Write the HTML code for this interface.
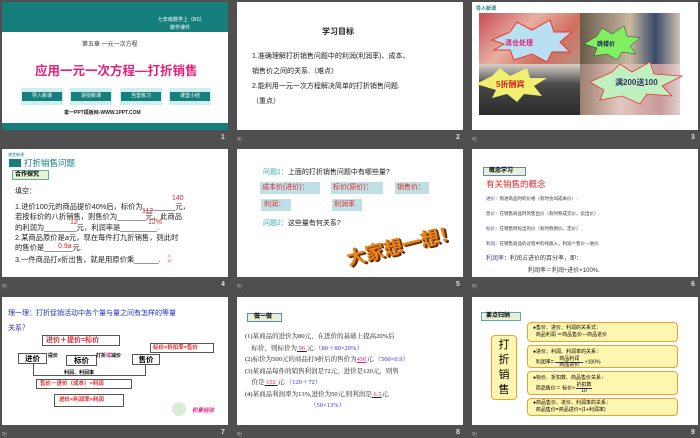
<!DOCTYPE html>
<html><head><meta charset="utf-8"><style>
*{margin:0;padding:0;box-sizing:border-box}
body{width:700px;height:438px;background:#4f4f4f;position:relative;overflow:hidden;font-family:"Liberation Sans","Noto Sans CJK SC",sans-serif}
.s{position:absolute;width:226px;height:128px;background:#fff;overflow:hidden}
.a{position:absolute;white-space:nowrap}
.n{position:absolute;color:#ddd;font-size:7px;font-weight:bold}
.m{position:absolute;color:#aaa;font-size:5px}
.btn{position:absolute;top:86px;width:42px;height:17px;background:#cdeff0}
.btn span{position:absolute;left:1px;right:1px;top:4px;height:9px;background:#167f7d;color:#fff;font-size:5px;text-align:center;line-height:9px}
.red{color:#e8262a}
.bx{position:absolute;border:1px solid #555;background:#fff}
</style></head><body>

<!-- slide 1 -->
<div class="s" style="left:2px;top:2px">
 <div class="a" style="left:0;top:0;width:226px;height:30px;background:#167f7d"></div>
 <div class="a" style="left:156px;top:14px;color:#fff;font-size:5px">七年级数学上（BS）</div>
 <div class="a" style="left:168px;top:22px;color:#fff;font-size:5px">数学课件</div>
 <div class="a" style="left:80px;top:37px;color:#333;font-size:6px">第五章 一元一次方程</div>
 <div class="a" style="left:33px;top:58px;color:#e0207a;font-size:12.5px;font-weight:bold">应用一元一次方程—打折销售</div>
 <div class="btn" style="left:19px"><span>导入新课</span></div>
 <div class="btn" style="left:68px"><span>讲授新课</span></div>
 <div class="btn" style="left:118px"><span>当堂练习</span></div>
 <div class="btn" style="left:167px"><span>课堂小结</span></div>
 <div class="a" style="left:62px;top:107px;color:#222;font-size:5px;font-weight:bold">第一PPT模板网-WWW.1PPT.COM</div>
 <div class="a" style="left:0;top:121px;width:226px;height:7px;background:#167f7d"></div>
</div>
<div class="n" style="left:221px;top:134px">1</div>

<!-- slide 2 -->
<div class="s" style="left:237px;top:2px">
 <div class="a" style="left:85px;top:24px;color:#222;font-size:8px;font-weight:bold">学习目标</div>
 <div class="a" style="left:15px;top:47px;color:#222;font-size:7px;line-height:15px">1.准确理解打折销售问题中的利润(利润率)、成本、<br>销售价之间的关系.（难点）<br>2.能利用一元一次方程解决简单的打折销售问题.<br>（重点）</div>
</div>
<div class="m" style="left:237px;top:136px">吩</div>
<div class="n" style="left:456px;top:134px">2</div>

<!-- slide 3 -->
<div class="s" style="left:472px;top:2px">
 <div class="a" style="left:4px;top:3px;color:#167f7d;font-size:5px;font-weight:bold">导入新课</div>
 <div class="a" style="left:7px;top:11px;width:101px;height:51px;background:linear-gradient(135deg,#c84a5a,#e8b0a0 40%,#d07060 70%,#b89080)"></div>
 <div class="a" style="left:108px;top:11px;width:100px;height:51px;background:linear-gradient(90deg,#6a5a4a,#c8b8a0 50%,#3a4a6a 75%,#d0c0b0)"></div>
 <div class="a" style="left:7px;top:62px;width:101px;height:51px;background:linear-gradient(180deg,#d8d0c8,#4a4a4a 40%,#2a2a2a)"></div>
 <div class="a" style="left:108px;top:62px;width:100px;height:51px;background:linear-gradient(90deg,#a08070,#e0c8c0 40%,#c89898 80%,#e0d0d0)"></div>
 <svg class="a" style="left:0;top:0" width="226" height="128">
  <polygon points="20,38 38,30 45,20 60,28 78,18 82,30 100,30 88,40 98,50 80,50 75,60 60,52 42,58 38,48 22,48 32,42" fill="#b8e0f0" stroke="#e33" stroke-width="1"/>
  <polygon points="112,42 125,34 130,26 140,32 152,24 155,34 168,36 158,44 164,52 150,50 145,58 135,52 122,54 125,46" fill="#80f060" stroke="#333" stroke-width=".5"/>
  <polygon points="4,82 20,74 28,66 38,74 55,66 58,76 75,76 62,84 70,94 52,92 45,100 35,92 20,96 24,88" fill="#f0f070"/>
  <polygon points="118,80 140,70 148,62 160,70 178,60 182,72 210,74 190,84 200,94 175,92 168,102 150,94 128,98 132,88" fill="#c0f0c0" stroke="#e33" stroke-width=".8"/>
 </svg>
 <div class="a" style="left:33px;top:36px;color:#e0207a;font-size:7px;font-weight:bold">清仓处理</div>
 <div class="a" style="left:125px;top:37px;color:#225;font-size:6px;font-weight:bold">跳楼价</div>
 <div class="a" style="left:24px;top:77px;color:#d22;font-size:8px;font-weight:bold">5折酬宾</div>
 <div class="a" style="left:143px;top:75px;color:#336;font-size:8px;font-weight:bold">满200送100</div>
</div>
<div class="m" style="left:472px;top:136px">吩</div>
<div class="n" style="left:691px;top:134px">3</div>

<!-- slide 4 -->
<div class="s" style="left:2px;top:149px">
 <div class="a" style="left:6px;top:3px;color:#167f7d;font-size:4px">课堂新课</div>
 <div class="a" style="left:7px;top:10px;width:12px;height:8px;background:#167f7d"></div>
 <div class="a" style="left:22px;top:8px;color:#167f7d;font-size:8.5px">打折销售问题</div>
 <div class="a" style="left:10px;top:21px;width:37px;height:10px;border:1px solid #6aa;background:#e8f4d0;font-size:6px;font-weight:bold;padding-left:2px;line-height:8px">合作探究</div>
 <div class="a" style="left:13px;top:37px;color:#222;font-size:7px">填空：</div>
 <div class="a" style="left:13px;top:53px;color:#222;font-size:7.3px;line-height:10.3px">1.进价100元的商品提价40%后，标价为________元，<br>若按标价的八折销售，则售价为_______元，此商品<br>的利润为________元，利润率是_________.<br>2.某商品原价是<i>a</i>元，现在每件打九折销售，则此时<br>的售价是_______元.<br><span style="display:inline-block;margin-top:2px">3.一件商品打<i>x</i>折出售，就是用原价乘______.</span></div>
 <div class="a red" style="left:170px;top:46px;font-size:7px">140</div>
 <div class="a red" style="left:140px;top:59px;font-size:7px">112</div>
 <div class="a red" style="left:68px;top:70px;font-size:7px">12</div>
 <div class="a red" style="left:146px;top:70px;font-size:7px">12%</div>
 <div class="a red" style="left:56px;top:94px;font-size:7px">0.9<i>a</i></div>
 <div class="a red" style="left:165px;top:104px;font-size:4px;line-height:5px;text-align:center">x<br>10</div>
</div>
<div class="m" style="left:2px;top:283px">吩</div>
<div class="n" style="left:221px;top:281px">4</div>

<!-- slide 5 -->
<div class="s" style="left:237px;top:149px">
 <div class="a" style="left:26px;top:18px;font-size:7px;color:#222"><span style="color:#3aa">问题1：</span>上面的打折销售问题中有哪些量?</div>
 <div class="a red" style="left:23px;top:33px;width:60px;height:12px;background:#bfe0e4;font-size:7px;padding-left:2px;line-height:12px">成本价(进价)：</div>
 <div class="a red" style="left:94px;top:33px;width:52px;height:12px;background:#bfe0e4;font-size:7px;padding-left:2px;line-height:12px">标价(原价)：</div>
 <div class="a red" style="left:158px;top:33px;width:34px;height:12px;background:#bfe0e4;font-size:7px;padding-left:2px;line-height:12px">销售价：</div>
 <div class="a red" style="left:24px;top:50px;width:30px;height:12px;background:#bfe0e4;font-size:7px;padding-left:3px;line-height:12px">利润：</div>
 <div class="a red" style="left:95px;top:50px;width:30px;height:12px;background:#bfe0e4;font-size:7px;padding-left:2px;line-height:12px">利润率</div>
 <div class="a" style="left:26px;top:69px;font-size:7px;color:#222"><span style="color:#3aa">问题2：</span>这些量有何关系?</div>
 <div class="a" style="left:108px;top:82px;font-size:19px;font-weight:bold;color:#e8861a;transform:rotate(-14deg);text-shadow:1px 1px 0 #8a3a00,2px 2px 0 #5a2000">大家想一想！</div>
</div>
<div class="m" style="left:237px;top:283px">吩</div>
<div class="n" style="left:456px;top:281px">5</div>

<!-- slide 6 -->
<div class="s" style="left:472px;top:149px">
 <div class="a" style="left:11px;top:18px;width:43px;height:9px;border:1px solid #5a8abf;background:#e8f0d8;font-size:6px;font-weight:bold;padding-left:5px;line-height:7px">概念学习</div>
 <div class="a red" style="left:14px;top:29px;font-size:8.5px">有关销售的概念</div>
 <div class="a" style="left:14px;top:42px;font-size:4.5px;color:#333;line-height:15px"><span style="color:#448">进价</span>：购进商品时的价格（有时也叫成本价）.<br><span style="color:#448">售价</span>：在销售商品时的售出价（有时称成交价，卖出价）.<br><span style="color:#448">标价</span>：在销售时标出的价（有时称原价，定价）.<br><span style="color:#448">利润</span>：在销售商品的过程中的纯收入，利润＝售价－进价.</div>
 <div class="a" style="left:14px;top:104px;font-size:6px;color:#333"><span style="color:#448">利润率</span>：利润占进价的百分率，即：</div>
 <div class="a" style="left:56px;top:116px;font-size:6px;color:#333">利润率＝利润÷进价×100%.</div>
</div>
<div class="m" style="left:472px;top:283px">吩</div>
<div class="n" style="left:691px;top:281px">6</div>

<!-- slide 7 -->
<div class="s" style="left:2px;top:297px">
 <div class="a" style="left:6px;top:9px;font-size:7px;color:#23c;line-height:15px">理一理：打折促销活动中各个量与量之间有怎样的等量<br>关系？</div>
 <div class="bx red" style="left:40px;top:38px;width:78px;height:11px;font-size:7px;font-weight:bold;padding-left:3px;line-height:9px">进价＋提价=标价</div>
 <div class="bx red" style="left:148px;top:46px;width:64px;height:10px;font-size:5.5px;font-weight:bold;padding-left:2px;line-height:8px">标价×折扣率=售价</div>
 <div class="a" style="left:31px;top:66px;width:113px;height:13px;border:1px solid #555;border-top:none"></div>
 <div class="bx" style="left:16px;top:56px;width:29px;height:11px;font-size:7.5px;font-weight:bold;text-align:center;line-height:9px">进价</div>
 <div class="bx" style="left:64px;top:58px;width:31px;height:11px;font-size:7.5px;font-weight:bold;text-align:center;line-height:9px">标价</div>
 <div class="bx" style="left:130px;top:57px;width:28px;height:11px;font-size:7.5px;font-weight:bold;text-align:center;line-height:9px">售价</div>
 <div class="a" style="left:46px;top:55px;font-size:5px;font-weight:bold">提价</div>
 <div class="a" style="left:94px;top:55px;font-size:5px;font-weight:bold">打折<span style="color:#e0207a">或</span>减价</div>
 <div class="a" style="left:62px;top:72px;font-size:5px;font-weight:bold">利润、利润率</div>
 <div class="bx red" style="left:34px;top:82px;width:96px;height:10px;font-size:5.5px;font-weight:bold;padding-left:3px;line-height:8px">售价－进价（成本）=利润</div>
 <div class="bx red" style="left:52px;top:97px;width:70px;height:13px;font-size:5.5px;font-weight:bold;padding-left:4px;line-height:11px">进价×利润率=利润</div>
 <div class="a" style="left:170px;top:105px;width:14px;height:14px;border-radius:50%;background:#d8ecd8"></div>
 <div class="a" style="left:190px;top:109px;font-size:5.5px;color:#e0207a;font-style:italic;font-weight:bold">积累经验</div>
</div>
<div class="m" style="left:2px;top:431px">吩</div>
<div class="n" style="left:221px;top:429px">7</div>

<!-- slide 8 -->
<div class="s" style="left:237px;top:297px">
 <div class="a" style="left:10px;top:16px;width:35px;height:9px;border:1px solid #5a8abf;background:#e8f0d8;font-size:6px;font-weight:bold;padding-left:6px;line-height:7px">做一做</div>
 <div class="a" style="left:8px;top:34px;font-size:6.5px;color:#222;line-height:11.5px;font-family:'Liberation Serif','Noto Serif CJK SC',serif">(1)某商品的进价为80元，在进价的基础上提高20%后<br>&nbsp;&nbsp;&nbsp;&nbsp;标价，则标价为<u>&nbsp;<span style="color:#e0207a">96</span>&nbsp;</u>元.<span style="color:#33c">（80＋80×20%）</span><br>(2)标价为500元的商品打9折后的售价为<u style="color:#e0207a">450</u>元.<span style="color:#33c">（500×0.9）</span><br>(3)某商品每件的销售利润是72元，进价是120元，则售<br>&nbsp;&nbsp;&nbsp;&nbsp;价是<u>&nbsp;<span style="color:#e0207a">192</span>&nbsp;</u>元.<span style="color:#33c">（120＋72）</span><br>(4)某商品利润率为13%,进价为50元,则利润是<u>&nbsp;<span style="color:#e0207a">6.5</span></u>元.<br>&nbsp;&nbsp;&nbsp;&nbsp;&nbsp;&nbsp;&nbsp;&nbsp;&nbsp;&nbsp;&nbsp;&nbsp;&nbsp;&nbsp;&nbsp;&nbsp;&nbsp;&nbsp;&nbsp;&nbsp;&nbsp;&nbsp;&nbsp;&nbsp;&nbsp;&nbsp;&nbsp;&nbsp;&nbsp;&nbsp;&nbsp;&nbsp;&nbsp;&nbsp;&nbsp;&nbsp;&nbsp;&nbsp;&nbsp;&nbsp;<span style="color:#33c">（50×13%）</span></div>
</div>
<div class="m" style="left:237px;top:431px">吩</div>
<div class="n" style="left:456px;top:429px">8</div>

<!-- slide 9 -->
<div class="s" style="left:472px;top:297px">
 <div class="a" style="left:9px;top:15px;width:40px;height:9px;border:1px solid #5ab;background:#e8f0d8;font-size:6px;font-weight:bold;padding-left:4px;line-height:7px">要点归纳</div>
 <div class="a" style="left:19px;top:38px;width:26px;height:65px;border:1.5px solid #f0a030;border-radius:4px;background:#fff7b0;font-size:11px;text-align:center;line-height:15px;padding-top:2px">打<br>折<br>销<br>售</div>
 <div class="a" style="left:55px;top:25px;width:151px;height:20px;border:1.5px solid #f0a030;border-radius:4px;background:#fff7b0;font-size:5px;line-height:7px;padding:2px 0 0 5px">●售价、进价、利润的关系式：<br>&nbsp;&nbsp;商品利润 ＝商品售价—商品进价</div>
 <div class="a" style="left:55px;top:48px;width:151px;height:23px;border:1.5px solid #f0a030;border-radius:4px;background:#fff7b0;font-size:5px;line-height:8px;padding:2px 0 0 5px">●进价、利润、利润率的关系：<br>&nbsp;&nbsp;利润率= <span style="display:inline-block;text-align:center;vertical-align:middle;line-height:6px"><span style="border-bottom:1px solid #339">&nbsp;&nbsp;&nbsp;商品利润&nbsp;&nbsp;&nbsp;</span><br>商品进价</span> ×100%</div>
 <div class="a" style="left:55px;top:74px;width:151px;height:24px;border:1.5px solid #f0a030;border-radius:4px;background:#fff7b0;font-size:5px;line-height:8px;padding:2px 0 0 5px">●标价、折扣数、商品售价关系：<br>&nbsp;&nbsp;商品售价＝ 标价× <span style="display:inline-block;text-align:center;vertical-align:middle;line-height:6px"><span style="border-bottom:1px solid #339">折扣数</span><br>10</span></div>
 <div class="a" style="left:55px;top:101px;width:151px;height:18px;border:1.5px solid #f0a030;border-radius:4px;background:#fff7b0;font-size:5px;line-height:7px;padding:1px 0 0 5px">●商品售价、进价、利润率的关系：<br>&nbsp;&nbsp;商品售价=商品进价×(1+利润率)</div>
</div>
<div class="m" style="left:472px;top:431px">吩</div>
<div class="n" style="left:691px;top:429px">9</div>
</body></html>
